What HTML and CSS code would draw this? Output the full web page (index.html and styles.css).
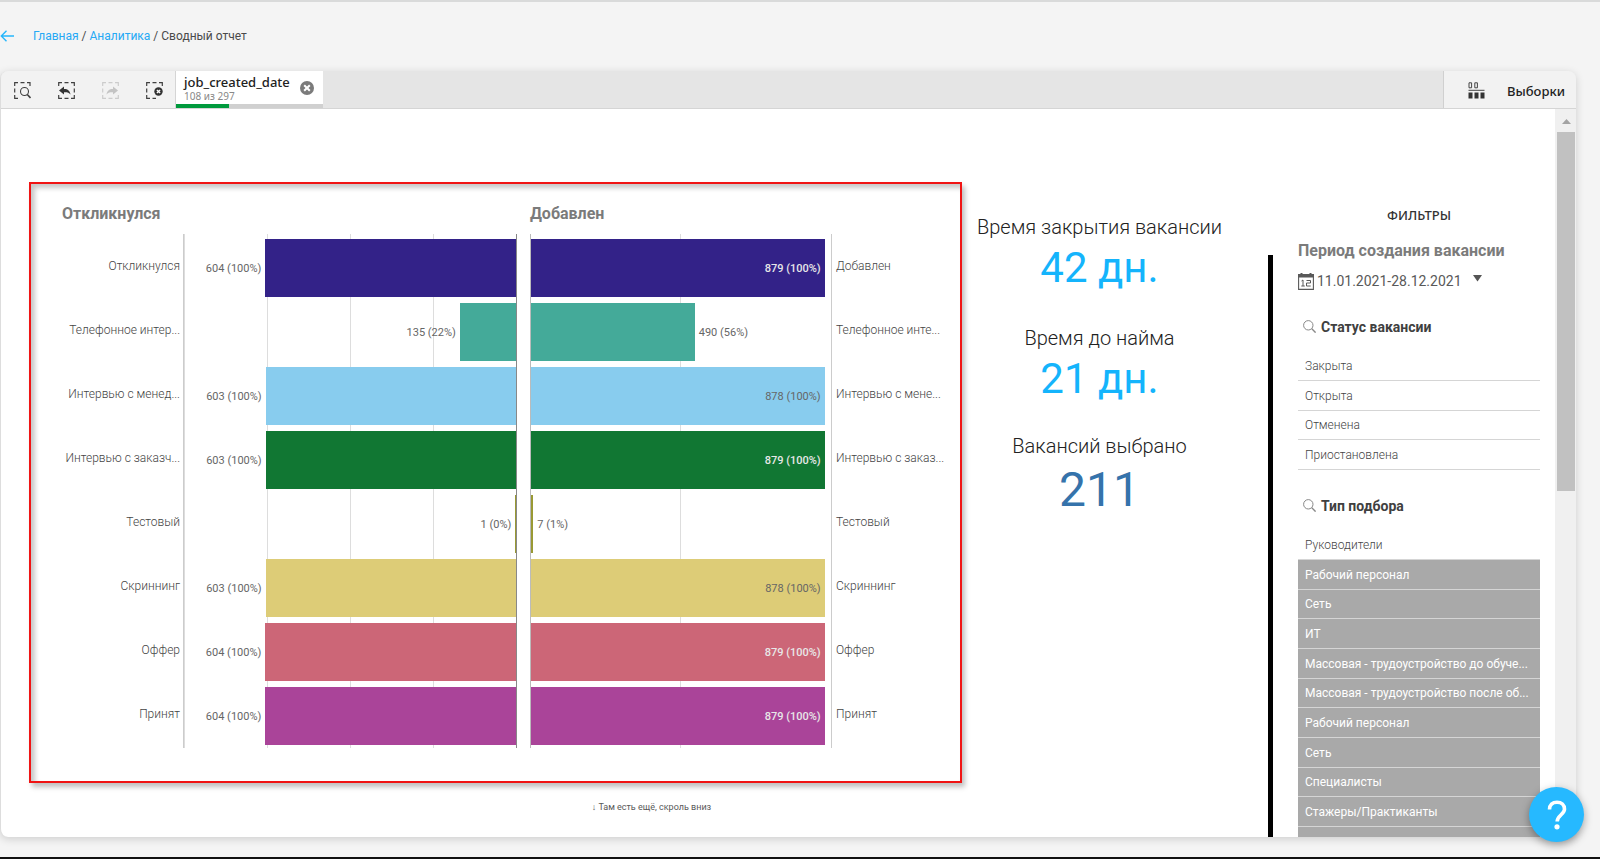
FILE: index.html
```html
<!DOCTYPE html>
<html lang="ru">
<head>
<meta charset="utf-8">
<title>Сводный отчет</title>
<link rel="stylesheet" href="styles.css">
</head>
<body>
<nav class="crumbs">
  <a class="back" href="#" aria-label="Назад"><svg width="14" height="12" viewBox="0 0 14 12" fill="none" stroke="#26b6fb" stroke-width="1.4"><path d="M14 6H1.5M6.500 .8 1.300 6l5.200 5.200"/></svg></a>
  <span><a href="#">Главная</a> / <a href="#">Аналитика</a> / Сводный отчет</span>
</nav>

<main class="panel">
  <header class="toolbar">
    <div class="tools">
      <button aria-label="Умный поиск"><svg width="17" height="17" viewBox="0 0 17 17" fill="none" stroke="#404040" stroke-width="1.2"><path d="M.7 4V.7H4M6.500.7h4M13 .7h3V4M.7 6.500v4M.7 13v3.300H4"/><circle cx="10.500" cy="9.500" r="4" stroke-width="1.100"/><path d="m13.300 12.500 3.200 3.500" stroke-width="1.600"/></svg></button>
      <button aria-label="Шаг назад"><svg width="17" height="17" viewBox="0 0 17 17" fill="none" stroke="#404040" stroke-width="1.2"><path d="M.7 4V.7H4M6.500.7h4M13 .7h3.300V4M16.300 6.500v4M.7 13v3.300H4M6.500 16.300h4M13 16.300h3.300V13"/><path d="M1 8.500 6 4.500V7c4 0 6 2 6.500 5.500C11 10.500 9 10 6 10.200v2.300z" fill="#333" stroke="none"/></svg></button>
      <button aria-label="Шаг вперед" disabled><svg width="17" height="17" viewBox="0 0 17 17" fill="none" stroke="#ccc" stroke-width="1.2"><path d="M.7 4V.7H4M6.500.7h4M13 .7h3.300V4M.7 6.500v4M.7 13v3.300H4M6.500 16.300h4M13 16.300h3.300V13"/><path d="M16 8.500 11 4.500V7c-4 0-6 2-6.500 5.500C6 10.500 8 10 11 10.200v2.300z" fill="#c4c4c4" stroke="none"/></svg></button>
      <button aria-label="Очистить все выборки"><svg width="17" height="17" viewBox="0 0 17 17" fill="none" stroke="#404040" stroke-width="1.2"><path d="M.7 4V.7H4M6.500.7h4M13 .7h3.300V4M.7 6.500v4M.7 13v3.300H4M6.500 16.300h3.500"/><circle cx="12.500" cy="9.500" r="4.200" fill="#333" stroke="none"/><path d="m10.900 7.900 3.200 3.200m0-3.200-3.200 3.200" stroke="#fff" stroke-width="1.400"/></svg></button>
    </div>
    <div class="tab">
      <div class="tab-body">
        <div><div class="tab-name">job_created_date</div><div class="tab-count">108 из 297</div></div>
        <button aria-label="Очистить выборку"><svg width="14" height="14" viewBox="0 0 14 14"><circle cx="7" cy="7" r="7" fill="#7b7b7b"/><path d="m4.200 4.200 5.600 5.600m0-5.600-5.600 5.600" stroke="#fff" stroke-width="2"/></svg></button>
      </div>
      <div class="tab-bar"><div style="width:36%"></div></div>
    </div>
    <button class="selections"><svg width="17" height="17" viewBox="0 0 17 17" fill="none" stroke="#444"><path d="M1 .8h2.600v5H1zM6.800.8h2.600v5H6.800zM.5 8.300h16" /><path d="M.5 10.500h4v6h-4zM6.500 10.500h4v6h-4zM12.500 10.500h4v6h-4z" fill="#333" stroke="none"/></svg>Выборки</button>
  </header>

  <div class="view">
    <div class="sheet">
      <div class="chart-col">
        <section class="chart">
          <h2 class="title-left">Откликнулся</h2>
          <h2 class="title-right">Добавлен</h2>
          <ul class="cats cats-left">
            <li>Откликнулся</li><li>Телефонное интер...</li><li>Интервью с менед...</li><li>Интервью с заказч...</li><li>Тестовый</li><li>Скриннинг</li><li>Оффер</li><li>Принят</li>
          </ul>
          <div class="plot plot-left">
            <div class="row"><span>604 (100%)</span><div class="bar c1" style="width:75.5%"></div></div>
            <div class="row"><span>135 (22%)</span><div class="bar c2" style="width:16.9%"></div></div>
            <div class="row"><span>603 (100%)</span><div class="bar c3" style="width:75.4%"></div></div>
            <div class="row"><span>603 (100%)</span><div class="bar c4" style="width:75.4%"></div></div>
            <div class="row"><span>1 (0%)</span><div class="bar c5" style="width:0.2%"></div></div>
            <div class="row"><span>603 (100%)</span><div class="bar c6" style="width:75.4%"></div></div>
            <div class="row"><span>604 (100%)</span><div class="bar c7" style="width:75.5%"></div></div>
            <div class="row"><span>604 (100%)</span><div class="bar c8" style="width:75.5%"></div></div>
          </div>
          <div class="plot plot-right">
            <div class="row"><div class="bar c1 light" style="width:97.9%"><span>879 (100%)</span></div></div>
            <div class="row"><div class="bar c2" style="width:54.6%"></div><span>490 (56%)</span></div>
            <div class="row"><div class="bar c3" style="width:97.9%"><span>878 (100%)</span></div></div>
            <div class="row"><div class="bar c4 light" style="width:97.9%"><span>879 (100%)</span></div></div>
            <div class="row"><div class="bar c5" style="width:0.8%"></div><span>7 (1%)</span></div>
            <div class="row"><div class="bar c6" style="width:97.9%"><span>878 (100%)</span></div></div>
            <div class="row"><div class="bar c7 light" style="width:97.9%"><span>879 (100%)</span></div></div>
            <div class="row"><div class="bar c8 light" style="width:97.9%"><span>879 (100%)</span></div></div>
          </div>
          <ul class="cats cats-right">
            <li>Добавлен</li><li>Телефонное инте...</li><li>Интервью с мене...</li><li>Интервью с заказ...</li><li>Тестовый</li><li>Скриннинг</li><li>Оффер</li><li>Принят</li>
          </ul>
        </section>
        <p class="hint">↓ Там есть ещё, скроль вниз</p>
      </div>

      <section class="kpis">
        <div class="kpi"><h3>Время закрытия вакансии</h3><p>42 дн.</p></div>
        <div class="kpi"><h3>Время до найма</h3><p>21 дн.</p></div>
        <div class="kpi total"><h3>Вакансий выбрано</h3><p>211</p></div>
      </section>

      <aside class="filters">
        <h2>ФИЛЬТРЫ</h2>
        <h3>Период создания вакансии</h3>
        <button class="period">
          <svg width="16" height="17" viewBox="0 0 16 17" fill="none" stroke="#595959"><path d="M.6 3h14.800v13.400H.6z" stroke-width="1.100"/><path d="M0 1h2.500V0h2v1h7V0h2v1H16v3.500H0z" fill="#595959" stroke="none"/><path d="M3.500 8 5 7v6M3.300 13h3.500M8.500 7.500h4V10h-4v3h4.200" stroke-width="1"/></svg>
          <span>11.01.2021-28.12.2021</span>
          <svg class="caret" width="9" height="7" viewBox="0 0 9 7"><path d="M0 0h9L4.500 6.500z" fill="#555"/></svg>
        </button>
        <div class="filter">
          <h4><svg width="13" height="13" viewBox="0 0 13 13" fill="none" stroke="#888"><circle cx="5.300" cy="5.300" r="4.700"/><path d="m8.800 8.800 3.800 3.800" stroke-width="1.400"/></svg>Статус вакансии</h4>
          <ul>
            <li><button>Закрыта</button></li><li><button>Открыта</button></li><li><button>Отменена</button></li><li><button>Приостановлена</button></li>
          </ul>
        </div>
        <div class="filter">
          <h4><svg width="13" height="13" viewBox="0 0 13 13" fill="none" stroke="#888"><circle cx="5.300" cy="5.300" r="4.700"/><path d="m8.800 8.800 3.800 3.800" stroke-width="1.400"/></svg>Тип подбора</h4>
          <ul>
            <li><button>Руководители</button></li>
            <li class="off"><button>Рабочий персонал</button></li>
            <li class="off"><button>Сеть</button></li>
            <li class="off"><button>ИТ</button></li>
            <li class="off"><button>Массовая - трудоустройство до обуче...</button></li>
            <li class="off"><button>Массовая - трудоустройство после об...</button></li>
            <li class="off"><button>Рабочий персонал</button></li>
            <li class="off"><button>Сеть</button></li>
            <li class="off"><button>Специалисты</button></li>
            <li class="off"><button>Стажеры/Практиканты</button></li>
            <li class="off"><button>Специалисты с опытом/ИТ</button></li>
          </ul>
        </div>
      </aside>
    </div>
    <div class="scrollbar"><svg width="9" height="5" viewBox="0 0 9 5"><path d="M0 5 4.500 0 9 5z" fill="#a3a3a3"/></svg><div class="thumb"></div></div>
  </div>
</main>

<button class="help" aria-label="Помощь"><svg width="20" height="30" viewBox="0 0 20 30" fill="none" stroke="#fff" stroke-width="3.600"><path d="M2.500 9.500C2.500 5 5.500 2.200 10 2.200s7.500 2.800 7.500 7c0 5-7.300 6.300-7.300 12.300"/><circle cx="10" cy="26.800" r="2.600" fill="#fff" stroke="none"/></svg></button>
</body>
</html>
```
FILE: styles.css
```css
* { box-sizing: border-box; }
body {
  margin: 0;
  height: 100vh;
  display: flex;
  flex-direction: column;
  overflow: hidden;
  background: #f4f4f4;
  border-top: 2px solid #d9dada;
  border-bottom: 2px solid #111;
  font-family: Roboto, "Noto Sans", sans-serif;
  color: #595959;
}
h2, h3, h4, p, ul { margin: 0; padding: 0; }
ul { list-style: none; }
button { font: inherit; color: inherit; border: 0; background: none; padding: 0; cursor: pointer; }
svg { display: block; flex: none; }

.crumbs {
  display: flex;
  align-items: center;
  gap: 19px;
  height: 69px;
  padding-bottom: 2px;
  font-size: 12px;
  color: #4a4a4a;
}
.crumbs a { color: #26a9f5; text-decoration: none; }

.panel {
  flex: 1;
  min-height: 0;
  display: flex;
  flex-direction: column;
  margin: 0 24px 20px 0;
  border-left: 1px solid #ddd;
  border-radius: 8px;
  overflow: hidden;
  background: #fff;
  box-shadow: 0 2px 8px rgba(0, 0, 0, .16);
}

.toolbar {
  flex: none;
  display: flex;
  height: 38px;
  background: #e5e5e5;
  border-bottom: 1px solid #d5d5d5;
}
.tools {
  display: flex;
  align-items: center;
  gap: 27px;
  width: 175px;
  padding: 1px 0 0 13px;
  background: #f2f2f2;
  border-right: 1px solid #d5d5d5;
}
.tab { width: 147px; display: flex; flex-direction: column; background: #fff; }
.tab-body {
  flex: 1;
  display: flex;
  justify-content: space-between;
  align-items: center;
  padding: 0 9px 0 8px;
}
.tab-name { font: 500 13px/16px "Noto Sans", sans-serif; color: #222; }
.tab-count { font: 10px/12px "Noto Sans", sans-serif; color: #888; }
.tab-bar { height: 4px; background: #d0d0d0; }
.tab-bar div { height: 100%; background: #009a3d; }
.selections {
  display: flex;
  align-items: center;
  gap: 22px;
  width: 133px;
  margin-left: auto;
  padding: 2px 0 0 24px;
  background: #f2f2f2;
  border-left: 1px solid #d0d0d0;
  font: 500 13px "Noto Sans", sans-serif;
  color: #222;
}

.view { flex: 1; min-height: 0; display: flex; }
.sheet { flex: 1; min-width: 0; display: flex; padding: 73px 15px 0 28px; overflow: hidden; }
.chart-col { flex: 1; min-width: 0; }

.chart {
  display: grid;
  grid-template-columns: 122px 334fr 13px 302fr 129px;
  grid-template-rows: 50px auto;
  padding-left: 31px;
  padding-bottom: 33px;
  border: 2px solid #f01414;
  box-shadow: 3px 4px 5px rgba(0, 0, 0, .25), inset 4px 4px 5px rgba(0, 0, 0, .22);
}
.chart h2 { font-size: 16px; line-height: 59px; color: #7b7b7b; }
.title-left { grid-area: 1 / 1 / 2 / 3; }
.title-right { grid-area: 1 / 4 / 2 / 6; }
.cats, .plot { grid-row: 2; padding-top: 2px; }
.cats li { height: 64px; font-size: 12px; font-weight: 300; line-height: 60px; white-space: nowrap; color: #444; }
.cats-left { grid-column: 1; text-align: right; padding-right: 3px; border-right: 1px solid #ccc; }
.cats-right { grid-column: 5; padding-left: 4px; border-left: 1px solid #ccc; }
.plot-left {
  grid-column: 2;
  border-right: 1px solid #888;
  background: repeating-linear-gradient(to left, transparent 0 calc(25% - 1px), #ddd calc(25% - 1px) 25%);
}
.plot-right {
  grid-column: 4;
  border-left: 1px solid #bbb;
  background: linear-gradient(#ddd, #ddd) 50% 0 / 1px 100% no-repeat;
}
.row { display: flex; align-items: center; height: 64px; font-size: 11px; color: #666; }
.row span { padding: 0 4px; white-space: nowrap; }
.plot-left .row { justify-content: flex-end; }
.bar { height: 58px; display: flex; align-items: center; justify-content: flex-end; }
.light { color: #e8e8e8; font-weight: 500; }
.c1 { background: #332288; }
.c2 { background: #44aa99; }
.c3 { background: #88ccee; }
.c4 { background: #117733; }
.c5 { background: #999933; }
.c6 { background: #ddcc77; }
.c7 { background: #cc6677; }
.c8 { background: #aa4499; }
.hint { padding: 17px 0 0 312px; text-align: center; font-size: 9px; line-height: 14px; }

.kpis { width: 306px; padding: 30px 31px 0 0; text-align: center; }
.kpi { height: 111px; white-space: nowrap; }
.kpi + .kpi { height: 108px; }
.kpi h3 { font-weight: 300; font-size: 20px; line-height: 30px; color: #222; }
.kpi p { font-size: 42px; line-height: 52px; color: #14b4fc; }
.kpi.total p { font-size: 48px; line-height: 58px; color: #3573ab; }

.filters {
  width: 272px;
  padding-left: 30px;
  position: relative;
}
.filters::before {
  content: "";
  position: absolute;
  left: 0;
  top: 73px;
  bottom: 0;
  width: 5px;
  background: #000;
}
.filters h2 { padding-top: 22px; text-align: center; font: 500 13px/22px "Noto Sans", sans-serif; color: #333; }
.filters h3 { padding-top: 14px; font-size: 16px; line-height: 22px; color: #7b7b7b; white-space: nowrap; }
.period { display: flex; align-items: center; gap: 3px; height: 38px; font-size: 14px; }
.caret { margin: 0 0 6px 8px; }
.filter h4 {
  display: flex;
  align-items: center;
  gap: 5px;
  height: 51px;
  padding: 2px 5px 0;
  font-size: 14px;
  line-height: 18px;
  color: #404040;
}
.filter + .filter { margin-top: 9px; }
.filter li { height: 30px; border-bottom: 1px solid #d5d5d5; }
.filter li:nth-child(3n) { height: 29px; }
.filter button { display: block; width: 100%; height: 100%; padding: 0 7px; text-align: left; font-size: 12px; font-weight: 300; color: #444; white-space: nowrap; }
.filter .off { background: #a9a9a9; }
.filter .off button { color: #fff; font-weight: 400; }

.scrollbar { width: 21px; flex: none; padding: 10px 1px 0 2px; background: #f0f0f0; }
.scrollbar svg { margin: 0 auto 8px; }
.thumb { height: 359px; background: #c1c1c1; }

.help {
  position: fixed;
  right: 16px;
  bottom: 17px;
  width: 55px;
  height: 55px;
  display: flex;
  align-items: center;
  justify-content: center;
  border-radius: 50%;
  background: #26b9ff;
  box-shadow: 0 3px 8px rgba(0, 0, 0, .35);
}
```
